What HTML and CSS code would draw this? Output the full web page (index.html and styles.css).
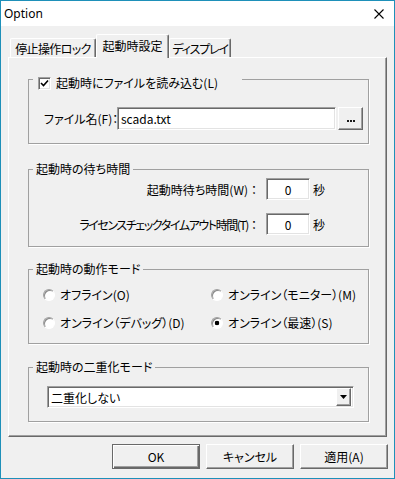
FILE: index.html
```html
<!DOCTYPE html>
<html lang="ja">
<head>
  <meta charset="UTF-8">
  <meta name="viewport" content="width=device-width, initial-scale=1.0">
  <title>Option</title>
  <link rel="stylesheet" href="styles.css">
</head>
<body>
  <div class="window">
    <div class="titlebar">
      <span class="title">Option</span>
      <svg class="close" width="10" height="10" viewBox="0 0 10 10">
        <path d="M0.5 0.5 L9.5 9.5 M9.5 0.5 L0.5 9.5" stroke="#000" stroke-width="1.1" fill="none"/>
      </svg>
    </div>

    <div class="client">
      <div class="tabs">
        <div class="tab tab-lock">停止操作ロック</div>
        <div class="tab tab-start active">起動時設定</div>
        <div class="tab tab-display">ディスプレイ</div>
      </div>

      <div class="panel">
        <!-- ファイル読み込み -->
        <fieldset class="group g-file">
          <legend class="check-legend">
            <span class="checkbox">
              <svg width="9" height="9" viewBox="0 0 9 9">
                <path d="M1 4 L3.5 6.5 L8 1.5" stroke="#000" stroke-width="1.6" fill="none"/>
              </svg>
            </span>
            <span>起動時にファイルを読み込む(L)</span>
          </legend>
          <div class="file-row">
            <span class="file-label">ファイル名(F)：</span>
            <div class="edit file-edit">scada.txt</div>
            <div class="btn btn-browse">
              <svg width="8" height="2" viewBox="0 0 8 2">
                <rect x="0" y="0" width="2" height="2" fill="#1a1a1a"/>
                <rect x="3" y="0" width="2" height="2" fill="#1a1a1a"/>
                <rect x="6" y="0" width="2" height="2" fill="#1a1a1a"/>
              </svg>
            </div>
          </div>
        </fieldset>

        <!-- 待ち時間 -->
        <fieldset class="group g-wait">
          <legend>起動時の待ち時間</legend>
          <div class="wait-grid">
            <span class="wait-label">起動時待ち時間(W)<span class="colon">：</span></span>
            <div class="edit num-edit">0</div>
            <span class="unit">秒</span>
            <span class="wait-label long">ライセンスチェックタイムアウト時間(T)<span class="colon">：</span></span>
            <div class="edit num-edit">0</div>
            <span class="unit">秒</span>
          </div>
        </fieldset>

        <!-- 動作モード -->
        <fieldset class="group g-mode">
          <legend>起動時の動作モード</legend>
          <div class="radio-grid">
            <label class="radio-item"><span class="radio"></span>オフライン(O)</label>
            <label class="radio-item"><span class="radio"></span>オンライン（モニター）(M)</label>
            <label class="radio-item"><span class="radio"></span>オンライン（デバッグ）(D)</label>
            <label class="radio-item"><span class="radio checked"></span>オンライン（最速）(S)</label>
          </div>
        </fieldset>

        <!-- 二重化モード -->
        <fieldset class="group g-dual">
          <legend>起動時の二重化モード</legend>
          <div class="dual-body">
            <div class="combo">
              <span class="combo-text">二重化しない</span>
              <span class="combo-btn">
                <svg width="7" height="4" viewBox="0 0 7 4"><path d="M0 0 H7 L3.5 4 Z" fill="#000"/></svg>
              </span>
            </div>
          </div>
        </fieldset>
      </div>

      <div class="buttons">
        <div class="btn btn-dialog btn-default">OK</div>
        <div class="btn btn-dialog">キャンセル</div>
        <div class="btn btn-dialog">適用(A)</div>
      </div>
    </div>
  </div>
</body>
</html>
```

FILE: styles.css
```css
/* ベース */
body {
  margin: 0;
  font-family: "Noto Sans CJK JP", sans-serif;
  font-size: 12px;
  font-feature-settings: "palt";
  color: #000;
}

.window {
  width: 395px;
  height: 479px;
  box-sizing: border-box;
  border: 1px solid #1e90b9;
  background: #f0f0f0;
  display: flex;
  flex-direction: column;
}

/* タイトルバー */
.titlebar {
  height: 25px;
  flex: none;
  background: #fff;
  display: flex;
  align-items: center;
  justify-content: space-between;
  padding: 0 10px 0 3px;
}

.title {
  font-family: "Noto Sans", sans-serif;
  font-size: 12px;
}

.close {
  display: block;
}

.client {
  flex: 1;
  padding: 8px 7px 0 7px;
}

/* タブ */
.tabs {
  display: flex;
  align-items: flex-end;
  height: 23px;
  padding-left: 2px;
}

.tab {
  box-sizing: border-box;
  height: 19px;
  border: 1px solid;
  border-bottom: none;
  border-color: #fff #696969 #696969 #fff;
  box-shadow: inset -1px 0 #a0a0a0;
  border-radius: 2px 2px 0 0;
  display: flex;
  align-items: center;
  justify-content: center;
  background: #f0f0f0;
  white-space: nowrap;
}

.tab-lock {
  width: 86px;
  letter-spacing: -0.6px;
}

.tab-display {
  width: 62px;
  letter-spacing: -1.2px;
}

.tab.active {
  width: 73px;
  height: 24px;
  margin-bottom: -1px;
  padding-bottom: 3px;
  position: relative;
}

/* タブパネル */
.panel {
  height: 380px;
  box-sizing: border-box;
  border: 1px solid;
  border-color: #fff #696969 #696969 #fff;
  box-shadow: inset -1px -1px #a0a0a0;
  padding: 9px 17px 0 19px;
}

/* グループボックス */
.group {
  margin: 0;
  padding: 0;
  min-width: 0;
  border: 1px solid #a0a0a0;
  box-shadow: 1px 1px #fff;
}

.group legend {
  margin-left: 4px;
  padding: 0 3px;
  line-height: 16px;
}

.g-wait { margin-top: 17px; }
.g-mode { margin-top: 14px; }
.g-dual { margin-top: 15px; }

.check-legend {
  box-sizing: border-box;
  width: 209px;
  padding: 8px 0 0 5px !important;
  display: flex;
  align-items: center;
  gap: 5px;
}

.checkbox {
  box-sizing: border-box;
  width: 13px;
  height: 13px;
  border: 1px solid;
  border-color: #a0a0a0 #fff #fff #a0a0a0;
  box-shadow: inset 1px 1px #696969, inset -1px -1px #e3e3e3;
  background: #fff;
  display: flex;
  align-items: center;
  justify-content: center;
}

.checkbox svg {
  display: block;
}

/* 全角コロンは詰めない */
.colon {
  font-feature-settings: normal;
  letter-spacing: 0;
}

/* 入力欄 */
.edit {
  box-sizing: border-box;
  height: 23px;
  border: 1px solid;
  border-color: #a0a0a0 #fff #fff #a0a0a0;
  box-shadow: inset 1px 1px #696969, inset -1px -1px #e3e3e3;
  background: #fff;
  display: flex;
  align-items: center;
  padding: 0 3px;
}

.file-row {
  display: flex;
  align-items: center;
  height: 23px;
  padding: 16px 5px 13px 15px;
}

.file-label {
  width: 73px;
  flex: none;
  white-space: nowrap;
}

.file-edit {
  flex: 1;
}

/* ボタン */
.btn {
  box-sizing: border-box;
  border: 1px solid;
  border-color: #fff #696969 #696969 #fff;
  box-shadow: inset -1px -1px #a0a0a0;
  background: #f0f0f0;
  display: flex;
  align-items: center;
  justify-content: center;
}

.btn-browse {
  width: 25px;
  height: 23px;
  margin-left: 2px;
  padding-top: 4px;
}

.btn-browse svg {
  display: block;
}

.buttons {
  display: flex;
  justify-content: flex-end;
  gap: 6px;
  padding-top: 7px;
  margin-right: -1px;
}

.btn-dialog {
  width: 88px;
  height: 25px;
}

.btn-default {
  border-color: #696969;
  box-shadow: inset 1px 1px #fff, inset -1px -1px #696969, inset -2px -2px #a0a0a0;
}

/* 待ち時間 */
.wait-grid {
  display: grid;
  grid-template-columns: 237px 44px auto;
  row-gap: 13px;
  align-items: center;
  padding: 1px 0 11px 0;
}

.wait-label {
  text-align: right;
  padding-right: 6px;
  white-space: nowrap;
}

.wait-label.long {
  letter-spacing: -1.4px;
}

.num-edit {
  height: 22px;
  justify-content: center;
}

.unit {
  margin-left: 3px;
}

/* ラジオボタン */
.radio-grid {
  display: grid;
  grid-template-columns: 168px 1fr;
  row-gap: 12px;
  padding: 10px 0 12px 14px;
}

.radio-item {
  display: flex;
  align-items: center;
  gap: 5px;
  line-height: 16px;
  white-space: nowrap;
}

.radio {
  box-sizing: border-box;
  width: 12px;
  height: 12px;
  border-radius: 50%;
  border: 1px solid;
  border-color: #a0a0a0 #fff #fff #a0a0a0;
  box-shadow: inset 1px 1px #8a8a8a;
  background: #fff;
}

.radio.checked {
  background: radial-gradient(circle, #000 0, #000 2px, #fff 2.6px);
}

/* コンボボックス */
.dual-body {
  padding: 11px 14px 13px 18px;
}

.combo {
  box-sizing: border-box;
  height: 22px;
  border: 1px solid;
  border-color: #a0a0a0 #fff #fff #a0a0a0;
  box-shadow: inset 1px 1px #696969, inset -1px -1px #e3e3e3;
  background: #fff;
  display: flex;
  align-items: center;
  padding: 2px 2px 2px 3px;
}

.combo-text {
  flex: 1;
}

.combo-btn {
  box-sizing: border-box;
  width: 15px;
  height: 18px;
  border: 1px solid;
  border-color: #fff #696969 #696969 #fff;
  box-shadow: inset -1px -1px #a0a0a0;
  background: #f0f0f0;
  display: flex;
  align-items: center;
  justify-content: center;
}

.combo-btn svg {
  display: block;
}
```
